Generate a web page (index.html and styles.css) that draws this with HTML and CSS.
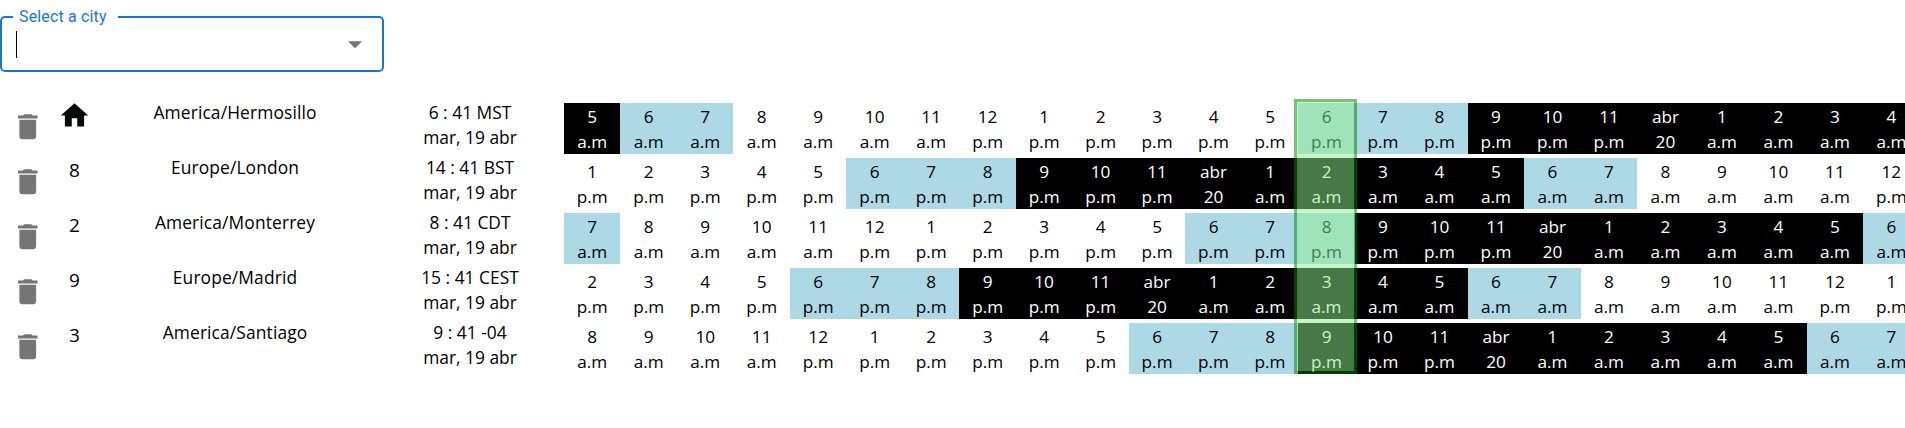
FILE: index.html
```html
<!DOCTYPE html>
<html lang="es">
<head>
<meta charset="utf-8">
<title>World clock</title>
<link rel="stylesheet" href="styles.css">
</head>
<body>
<svg class="sprite" aria-hidden="true">
  <symbol id="trash" viewBox="0 0 24 24"><path d="M6 19c0 1.100.9 2 2 2h8c1.100 0 2-.9 2-2V7H6v12zM19 4h-3.500l-1-1h-5l-1 1H5v2h14V4z"/></symbol>
  <symbol id="home" viewBox="0 0 24 24"><path d="M10 20v-6h4v6h5v-8h3L12 3 2 12h3v8z"/></symbol>
</svg>
<fieldset class="picker">
  <legend class="picker-label">Select a city</legend>
  <div class="picker-field">
    <span class="caret"></span>
    <svg class="arrow" viewBox="0 0 24 24"><path d="M7 10l5 5 5-5z"/></svg>
  </div>
</fieldset>
<main class="zones" id="zones"></main>
<script src="script.js"></script>
</body>
</html>
```
FILE: styles.css
```css
* { box-sizing: border-box; }
body {
  margin: 0;
  height: 428px;
  overflow: hidden;
  background: #fff;
  color: #000;
  font: 17.2px/25px "Open Sans", "Noto Sans", sans-serif;
}
.sprite { display: none; }
.picker {
  width: 384px;
  height: 64px;
  margin: 8px 0 0;
  padding: 0;
  border: 2px solid #1976d2;
  border-radius: 5px;
}
.picker-label {
  width: 105px;
  margin-left: 11px;
  padding: 0 0 0 6px;
  color: #1976d2;
  font: 16px/18px Roboto, sans-serif;
  letter-spacing: .15px;
}
.picker-field {
  display: flex;
  align-items: flex-start;
  justify-content: space-between;
  padding: 5px 10.5px 0 14px;
}
.caret { width: 1px; height: 27px; background: #000; }
.arrow { width: 34px; height: 34px; margin-top: -4px; fill: #757575; }
.zones {
  position: relative;
  display: flex;
  flex-direction: column;
  gap: 4px;
  margin-top: 31px;
}
.zone {
  display: grid;
  grid-template-columns: 55px 39px 282px 188px auto;
  height: 51px;
  text-align: center;
}
.trash { width: 33.5px; height: 33.5px; margin: 7px 0 0 11px; fill: #757575; }
.home { display: block; width: 33px; height: 33px; margin: -4px 0 0 3px; fill: #020a07; }
.offset { font-size: 19px; }
.name, .time { margin-top: -3px; font-size: 17.4px; }
.name { letter-spacing: .12px; }
.hours { display: grid; grid-template-columns: repeat(24, 56.49px); }
.hour { padding-top: 1px; }
.night { background: #000; color: #fff; }
.dusk { background: #add8e6; }
.selected {
  position: absolute;
  left: 1294px;
  top: -4px;
  width: 63px;
  height: 275px;
  border: 3px solid green;
  background: lightgreen;
  opacity: .5;
}
```
FILE: script.js
```js
const zones = [
  ["", "America/Hermosillo", "6 : 41 MST", 5],
  ["8", "Europe/London", "14 : 41 BST", 13],
  ["2", "America/Monterrey", "8 : 41 CDT", 7],
  ["9", "Europe/Madrid", "15 : 41 CEST", 14],
  ["3", "America/Santiago", "9 : 41 -04", 8]
];

function hourCell(hour) {
  const h = hour % 24;
  const tone = h < 6 || h > 20 ? "night" : h < 8 || h > 17 ? "dusk" : "day";
  const label = h === 0 ? "abr<br>20" : `${h % 12 || 12}<br>${h < 12 ? "a.m" : "p.m"}`;
  return `<div class="hour ${tone}">${label}</div>`;
}

document.getElementById("zones").innerHTML = zones.map(([offset, name, time, start]) => `
  <section class="zone">
    <svg class="trash"><use href="#trash"/></svg>
    <div class="offset">${offset || '<svg class="home"><use href="#home"/></svg>'}</div>
    <div class="name">${name}</div>
    <div class="time">${time}<br>mar, 19 abr</div>
    <div class="hours">${Array.from({ length: 24 }, (_, i) => hourCell(start + i)).join("")}</div>
  </section>`).join("") + '<div class="selected"></div>';
```
